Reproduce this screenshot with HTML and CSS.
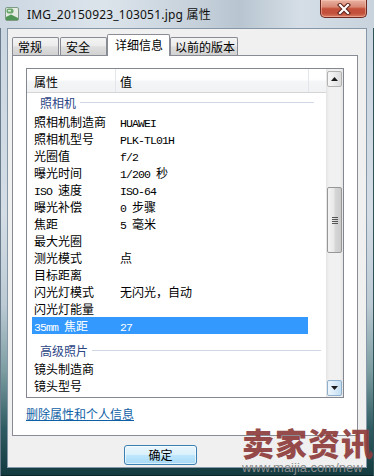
FILE: index.html
```html
<!DOCTYPE html>
<html lang="zh-CN">
<head>
<meta charset="utf-8">
<title>IMG_20150923_103051.jpg 属性</title>
<link rel="stylesheet" href="styles.css">
</head>
<body>
<div class="window">
  <div class="titlebar">
    <svg class="appicon" viewBox="0 0 14 14" width="14" height="14">
      <rect x="0.5" y="0.5" width="13" height="13" rx="1.5" fill="#e3ebe2" stroke="#7f9a86"/>
      <rect x="1.5" y="1.5" width="7" height="5" rx="2" fill="#6aa86c"/>
      <rect x="3" y="3" width="3" height="1.5" fill="#d8ecd6"/>
      <path d="M1 10 L6 7.5 L13 11 V13 H1 Z" fill="#4f9656"/>
    </svg>
    <span class="title">IMG_20150923_103051.jpg 属性</span>
    <div class="close">
      <svg viewBox="0 0 14 12" width="14" height="12">
        <path d="M3 2 L11 10 M11 2 L3 10" stroke="#5b2219" stroke-width="4.2" stroke-linecap="square"/>
        <path d="M3 2 L11 10 M11 2 L3 10" stroke="#ffffff" stroke-width="2.2" stroke-linecap="square"/>
      </svg>
    </div>
  </div>
  <div class="client">
    <div class="tabs">
      <div class="tab t1">常规</div>
      <div class="tab t2">安全</div>
      <div class="tab sel">详细信息</div>
      <div class="tab t4">以前的版本</div>
    </div>
    <div class="panel">
      <div class="listbox">
        <div class="listmain">
          <div class="header">
            <div class="hc c1">属性</div>
            <div class="hc c2">值</div>
            <div class="hc c3"></div>
          </div>
          <div class="group g1"><span>照相机</span><i class="gline"></i></div>
          <div class="row"><span class="k">照相机制造商</span><span class="v"><span class="m">HUAWEI</span></span></div>
          <div class="row"><span class="k">照相机型号</span><span class="v"><span class="m">PLK-TL01H</span></span></div>
          <div class="row"><span class="k">光圈值</span><span class="v"><span class="m">f/2</span></span></div>
          <div class="row"><span class="k">曝光时间</span><span class="v"><span class="m">1/200 </span>秒</span></div>
          <div class="row"><span class="k"><span class="m">ISO </span>速度</span><span class="v"><span class="m">ISO-64</span></span></div>
          <div class="row"><span class="k">曝光补偿</span><span class="v"><span class="m">0 </span>步骤</span></div>
          <div class="row"><span class="k">焦距</span><span class="v"><span class="m">5 </span>毫米</span></div>
          <div class="row"><span class="k">最大光圈</span><span class="v"></span></div>
          <div class="row"><span class="k">测光模式</span><span class="v">点</span></div>
          <div class="row"><span class="k">目标距离</span><span class="v"></span></div>
          <div class="row"><span class="k">闪光灯模式</span><span class="v">无闪光，自动</span></div>
          <div class="row"><span class="k">闪光灯能量</span><span class="v"></span></div>
          <div class="row sel"><span class="k"><span class="m">35mm </span>焦距</span><span class="v"><span class="m">27</span></span></div>
          <div class="group g2"><span>高级照片</span><i class="gline"></i></div>
          <div class="row"><span class="k">镜头制造商</span><span class="v"></span></div>
          <div class="row"><span class="k">镜头型号</span><span class="v"></span></div>
        </div>
        <div class="scrollbar">
          <div class="sbtn up">
            <svg viewBox="0 0 7 4" width="7" height="4"><path d="M0 4 L3.5 0 L7 4 Z" fill="#1a1a1a"/></svg>
          </div>
          <div class="track">
            <div class="thumb">
              <div class="grip"><i></i><i></i><i></i><i></i></div>
            </div>
          </div>
          <div class="sbtn down">
            <svg viewBox="0 0 7 4" width="7" height="4"><path d="M0 0 L7 0 L3.5 4 Z" fill="#1a1a1a"/></svg>
          </div>
        </div>
      </div>
      <a class="link">删除属性和个人信息</a>
    </div>
    <div class="buttons">
      <div class="btn">确定</div>
    </div>
  </div>
  <div class="wm">
    <div class="wm-big">卖家资讯</div>
    <div class="wm-url">www.maijia.com/new</div>
  </div>
</div>
</body>
</html>
```
FILE: styles.css
```css
* { box-sizing: border-box; }
html, body { margin: 0; padding: 0; }
body {
  width: 374px;
  height: 476px;
  overflow: hidden;
  font-family: "Noto Sans CJK SC", sans-serif;
  font-size: 12px;
  color: #000;
}
.window {
  position: relative;
  width: 374px;
  height: 476px;
  display: flex;
  flex-direction: column;
  background: linear-gradient(180deg, #c9d5e0 0%, #d4dde6 45%, #bccad4 64%, #7c9da1 78%, #2f5c62 90%, #123a3f 100%);
  box-shadow: inset 1px 0 0 #6a7b8b, inset -1px 0 0 #2f5157, inset 0 -1px 0 #0b2629;
  overflow: hidden;
}
.titlebar {
  flex: none;
  height: 28px;
  display: flex;
  align-items: center;
  padding-left: 5px;
  background: linear-gradient(90deg, #ccd7e2 0%, #dce4eb 28%, #c6d1db 52%, #b8c5d0 64%, #d5dee6 80%, #c8d3dd 100%);
}
.appicon { flex: none; display: block; }
.title {
  margin-left: 8px;
  font-family: "Noto Sans", "Noto Sans CJK SC", sans-serif;
  font-size: 12px;
  color: #101010;
  letter-spacing: 0.2px;
}
.close {
  align-self: flex-start;
  margin-left: auto;
  margin-right: 7px;
  width: 47px;
  height: 18px;
  border: 1px solid #6e2a20;
  border-top: none;
  border-radius: 0 0 5px 5px;
  background: linear-gradient(180deg, #eab2a2 0%, #d98a75 40%, #c4503a 52%, #c1503a 78%, #dc7b62 100%);
  box-shadow: inset 0 0 0 1px rgba(255, 210, 195, 0.45);
  display: flex;
  align-items: center;
  justify-content: center;
}
.close svg { display: block; }
.client {
  flex: none;
  margin-left: 7px;
  width: 360px;
  height: 440px;
  background: #f0f0f0;
  border: 1px solid #8697a8;
  display: flex;
  flex-direction: column;
}
.tabs {
  flex: none;
  margin-top: 5px;
  height: 21px;
  padding-left: 4px;
  display: flex;
  align-items: flex-end;
}
.tab {
  height: 18px;
  border: 1px solid #898c95;
  border-bottom: none;
  border-radius: 2px 2px 0 0;
  background: linear-gradient(180deg, #f4f4f4 0%, #ececec 45%, #dedede 52%, #d2d2d2 100%);
  line-height: 16px;
  padding-top: 1px;
  white-space: nowrap;
}
.t1 { width: 47px; padding-left: 5px; }
.t2 { width: 47px; margin-left: 1px; padding-left: 5px; }
.t4 { width: 68px; padding-left: 4px; }
.tab.sel {
  position: relative;
  z-index: 1;
  width: 63px;
  height: 22px;
  margin-bottom: -1px;
  padding-left: 7px;
  padding-top: 2px;
  background: #fff;
}
.panel {
  flex: none;
  margin-left: 4px;
  width: 346px;
  height: 381px;
  border: 1px solid #898c95;
  background: #fff;
  padding: 12px 0 0 13px;
}
.listbox {
  width: 318px;
  height: 330px;
  border: 1px solid #828790;
  display: flex;
  background: #fff;
}
.listmain {
  flex: 1;
  overflow: hidden;
}
.header {
  height: 24px;
  display: flex;
  border-bottom: 1px solid #d5d5d5;
  background: linear-gradient(180deg, #ffffff 0%, #ffffff 45%, #f4f5f7 55%, #f1f2f4 100%);
}
.hc {
  height: 23px;
  line-height: 23px;
  padding-top: 1px;
}
.c1 { width: 89px; padding-left: 7px; border-right: 1px solid #e3e6ea; }
.c2 { width: 193px; padding-left: 4px; border-right: 1px solid #e3e6ea; }
.c3 { flex: 1; }
.group {
  height: 20px;
  display: flex;
  align-items: center;
  padding-left: 13px;
  padding-bottom: 2px;
  color: #2b4585;
}
.gline {
  flex: 1;
  height: 1px;
  margin-left: 4px;
  background: #cfd8e4;
}
.g1 .gline { margin-right: 12px; }
.g2 { margin-top: 6px; padding-bottom: 0; }
.g2 .gline { margin-right: 5px; }
.row {
  height: 17px;
  line-height: 17px;
  margin-left: 5px;
  width: 276px;
  display: flex;
  white-space: nowrap;
}
.k { width: 88px; padding-left: 2px; flex: none; }
.v { flex: 1; }
.m {
  font-family: "Liberation Mono", monospace;
  font-size: 11.5px;
  letter-spacing: -0.9px;
}
.row.sel { background: #3399ff; color: #fff; }
.scrollbar {
  flex: none;
  width: 17px;
  display: flex;
  flex-direction: column;
  padding: 2px 1px 1px;
  background: linear-gradient(90deg, #e4e4e4 0%, #f1f1f1 20%, #f1f1f1 80%, #e6e6e6 100%);
}
.sbtn {
  flex: none;
  height: 16px;
  border: 1px solid #b2b2b2;
  border-radius: 2px;
  background: linear-gradient(90deg, #f7f7f7 0%, #ececec 50%, #dcdcdc 100%);
  display: flex;
  align-items: center;
  justify-content: center;
}
.sbtn svg { display: block; }
.sbtn.down {
  border-color: #8fb0cc;
  background: linear-gradient(90deg, #eef6fc 0%, #d9ebf8 50%, #c4def2 100%);
}
.track { flex: 1; }
.thumb {
  margin-top: 100px;
  height: 66px;
  border: 1px solid #979797;
  border-radius: 2px;
  background: linear-gradient(90deg, #f3f3f3 0%, #e8e8e8 45%, #d6d6d6 55%, #cbcbcb 100%);
  display: flex;
  align-items: center;
  justify-content: center;
}
.grip { display: flex; flex-direction: column; gap: 1px; }
.grip i { display: block; width: 6px; height: 1px; background: #555; }
.link {
  display: inline-block;
  margin-top: 9px;
  line-height: 14px;
  color: #0f5fa6;
  text-decoration: underline;
}
.buttons {
  flex: none;
  margin-top: 9px;
  padding-left: 116px;
}
.btn {
  width: 73px;
  height: 20px;
  border: 1px solid #3c7fb1;
  border-radius: 3px;
  background: linear-gradient(180deg, #eaf6fd 0%, #d9f0fc 48%, #bee6fd 52%, #a7d9f5 100%);
  box-shadow: inset 0 0 0 1px rgba(255, 255, 255, 0.6);
  text-align: center;
  line-height: 18px;
}
.wm {
  position: absolute;
  left: 242px;
  top: 425px;
  white-space: nowrap;
}
.wm-big {
  font-family: "Noto Sans CJK SC", sans-serif;
  font-weight: 900;
  font-size: 32px;
  line-height: 34px;
  letter-spacing: 1px;
  color: #8e3d3b;
  opacity: 0.92;
}
.wm-url {
  margin-top: 2px;
  font-family: "Liberation Sans", sans-serif;
  font-size: 13px;
  line-height: 14px;
  color: #8a8a8a;
}
```
